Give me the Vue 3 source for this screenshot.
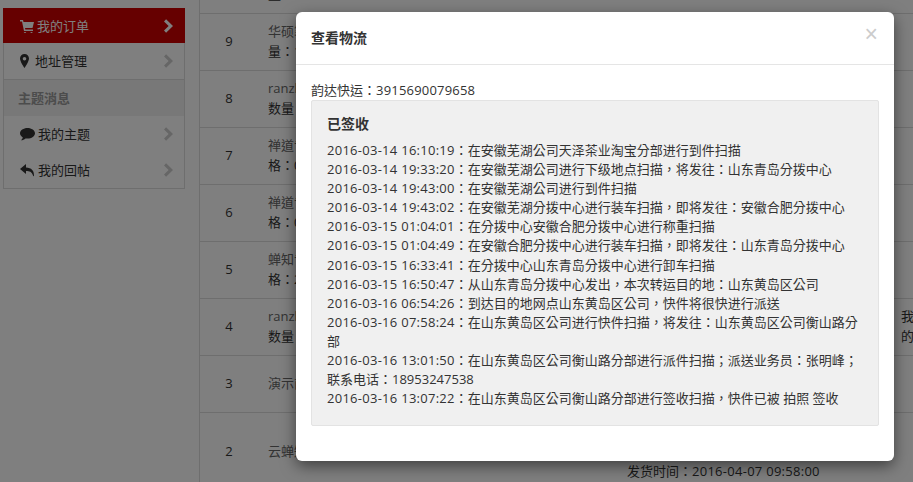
<script setup>
const orders = [
  { no: 10, lines: [{ t: '华硕笔记本电脑', link: true }, { t: '量：1' }] },
  { no: 9, lines: [{ t: '华硕笔记本电脑', link: true }, { t: '量：1' }] },
  { no: 8, lines: [{ t: 'ranzhi 然之协同', link: true }, { t: '数量：1' }] },
  { no: 7, lines: [{ t: '禅道专业版', link: true }, { t: '格：0.01' }] },
  { no: 6, lines: [{ t: '禅道专业版', link: true }, { t: '格：0.01' }] },
  { no: 5, lines: [{ t: '蝉知专业版', link: true }, { t: '格：2' }] },
  { no: 4, lines: [{ t: 'ranzhi 然之协同', link: true }, { t: '数量：1' }], note: ['我', '的'] },
  { no: 3, lines: [{ t: '演示商品', link: true }] },
  { no: 2, lines: [{ t: '云蝉知专业版', link: true }], shipped: '2016-04-07 09:58:00', tall: true }
]
const topMenu = [
  { name: '我的订单', icon: 'cart', active: true },
  { name: '地址管理', icon: 'pin' }
]
const subMenu = [
  { name: '我的主题', icon: 'comment' },
  { name: '我的回帖', icon: 'reply' }
]
const tracks = [
  ['2016-03-14 16:10:19', '在安徽芜湖公司天泽茶业淘宝分部进行到件扫描'],
  ['2016-03-14 19:33:20', '在安徽芜湖公司进行下级地点扫描，将发往：山东青岛分拨中心'],
  ['2016-03-14 19:43:00', '在安徽芜湖公司进行到件扫描'],
  ['2016-03-14 19:43:02', '在安徽芜湖分拨中心进行装车扫描，即将发往：安徽合肥分拨中心'],
  ['2016-03-15 01:04:01', '在分拨中心安徽合肥分拨中心进行称重扫描'],
  ['2016-03-15 01:04:49', '在安徽合肥分拨中心进行装车扫描，即将发往：山东青岛分拨中心'],
  ['2016-03-15 16:33:41', '在分拨中心山东青岛分拨中心进行卸车扫描'],
  ['2016-03-15 16:50:47', '从山东青岛分拨中心发出，本次转运目的地：山东黄岛区公司'],
  ['2016-03-16 06:54:26', '到达目的地网点山东黄岛区公司，快件将很快进行派送'],
  ['2016-03-16 07:58:24', '在山东黄岛区公司进行快件扫描，将发往：山东黄岛区公司衡山路分部'],
  ['2016-03-16 13:01:50', '在山东黄岛区公司衡山路分部进行派件扫描；派送业务员：张明峰；联系电话：18953247538'],
  ['2016-03-16 13:07:22', '在山东黄岛区公司衡山路分部进行签收扫描，快件已被 拍照 签收']
]
const icons = {
  cart: 'M0 1h3l.5 2H14l-1.5 6H5l.3 1.4H13V12H4L2 2.6H0z M5 13a1.3 1.3 0 1 0 .01 0z M11.5 13a1.3 1.3 0 1 0 .01 0z',
  pin: 'M4.5 0C2 0 0 2 0 4.600 0 7.800 4.500 14 4.500 14S9 7.800 9 4.600C9 2 7 0 4.500 0zm0 3a1.800 1.800 0 1 1 0 3.600 1.800 1.800 0 0 1 0-3.600z',
  comment: 'M7.500 1C3.400 1 0 3.300 0 6.300c0 1.700 1.100 3.200 2.800 4.200-.2 1-.8 1.900-1.800 2.700 1.800-.1 3.300-.7 4.500-1.800.6.100 1.300.2 2 .2 4.100 0 7.500-2.300 7.500-5.300S11.600 1 7.500 1z',
  reply: 'M6 1 0 6l6 5V8c3.500 0 5.800.8 7 4.500.3.800.8 1 1 .5.300-5-2.500-8.500-8-8.500z'
}
</script>

<template>
  <div class="page">
    <aside class="sidebar">
      <a v-for="m in topMenu" :key="m.name" class="item" :class="{ active: m.active }">
        <svg class="ico" :class="'ico-' + m.icon" viewBox="0 0 15 14"><path :d="icons[m.icon]" /></svg>
        <span>{{ m.name }}</span>
        <svg class="chev" viewBox="0 0 9.500 14"><path d="M2.200 0 9.500 7l-7.300 7L0 11.800 4.900 7 0 2.200z" /></svg>
      </a>
      <div class="group">主题消息</div>
      <a v-for="m in subMenu" :key="m.name" class="item">
        <svg class="ico" :class="'ico-' + m.icon" viewBox="0 0 15 14"><path :d="icons[m.icon]" /></svg>
        <span>{{ m.name }}</span>
        <svg class="chev" viewBox="0 0 9.500 14"><path d="M2.200 0 9.500 7l-7.300 7L0 11.800 4.900 7 0 2.200z" /></svg>
      </a>
    </aside>

    <section class="table">
      <div v-for="o in orders" :key="o.no" class="row" :class="{ tall: o.tall }">
        <div class="num">{{ o.no }}</div>
        <div class="product">
          <div v-for="l in o.lines" :key="l.t" :class="{ link: l.link }">{{ l.t }}</div>
        </div>
        <div class="status">
          <div v-if="o.shipped" class="shipped">发货时间：<span class="digits">{{ o.shipped }}</span></div>
        </div>
        <div class="note">
          <div v-for="n in o.note" :key="n">{{ n }}</div>
        </div>
      </div>
    </section>

    <div class="backdrop"></div>

    <div class="modal">
      <header class="modal-head">
        <h4>查看物流</h4>
        <span class="close">×</span>
      </header>
      <div class="modal-body">
        <div class="bill">韵达快运：<span class="digits bill-no">3915690079658</span></div>
        <div class="well">
          <h5>已签收</h5>
          <div v-for="t in tracks" :key="t[0]" class="track"><span class="digits">{{ t[0] }}</span>：{{ t[1] }}</div>
        </div>
      </div>
    </div>
  </div>
</template>

<style>
html, body { margin: 0; overflow: hidden; background: #fff; }
</style>

<style scoped>
.page {
  position: relative;
  display: flex;
  align-items: flex-start;
  width: 913px;
  height: 482px;
  overflow: hidden;
  background: #fff;
  color: #333;
  font: 13px/20px "Open Sans", "Noto Sans CJK TC", sans-serif;
}
.digits { letter-spacing: .27px; }
.bill-no { letter-spacing: .2px; }
.sidebar {
  flex: none;
  width: 180px;
  margin: 8px 14px 0 3px;
  border: 1px solid #ddd;
  border-top: 0;
}
.item {
  display: flex;
  align-items: center;
  height: 36px;
  padding-left: 16px;
  color: #333;
}
.item:nth-child(2) { border-bottom: 1px solid #ddd; }
.item.active {
  height: 35px;
  margin: 0 -1px;
  padding-left: 17px;
  background: #c00;
  color: #fff;
}
.ico { flex: none; width: 15px; height: 14px; margin-right: 3px; fill: currentColor; }
.active .ico { margin-right: 2px; }
.ico-pin { margin-right: 0; }
.chev { flex: none; width: 9px; height: 14px; margin-left: auto; margin-right: 11px; fill: #ccc; }
.active .chev { fill: #fff; margin-right: 12px; }
.group {
  height: 36px;
  padding-left: 14px;
  background: #f0f0f0;
  color: #999;
  font-weight: 700;
  line-height: 36px;
}
.table {
  flex: none;
  width: 760px;
  margin-top: -43px;
  border-left: 1px solid #ddd;
}
.row {
  display: flex;
  align-items: center;
  box-sizing: border-box;
  height: 57px;
  padding-bottom: 2px;
  border-bottom: 1px solid #ddd;
}
.row.tall { height: 78px; border-bottom: 0; }
.num { flex: none; width: 58px; text-align: center; }
.product { flex: none; width: 339px; padding: 0 10px; white-space: nowrap; }
.link { color: #666; }
.status { flex: none; width: 254px; padding: 0 10px; align-self: flex-end; }
.shipped { padding-bottom: 8px; white-space: nowrap; }
.note { padding-left: 10px; }
.backdrop {
  position: absolute;
  inset: 0;
  background: rgba(0, 0, 0, .5);
}
.modal {
  position: absolute;
  top: 12px;
  left: 296px;
  box-sizing: border-box;
  width: 598px;
  height: 449px;
  border-radius: 6px;
  background: #fff;
  box-shadow: 0 5px 15px rgba(0, 0, 0, .5);
}
.modal-head {
  display: flex;
  align-items: center;
  justify-content: space-between;
  box-sizing: border-box;
  height: 53px;
  padding: 0 15px;
  border-bottom: 1px solid #e5e5e5;
}
.modal-head h4 { margin: 0; font-size: 14px; font-weight: 700; line-height: 52px; }
.close { margin-top: -8px; margin-right: 1px; color: #ccc; font: 400 23px/1 "Liberation Sans", sans-serif; }
.modal-body { padding: 15px 15px 0; }
.bill { height: 20px; }
.well {
  box-sizing: border-box;
  padding: 15px 15px 17px;
  border: 1px solid #e3e3e3;
  border-radius: 2px;
  background: #f0f0f0;
  line-height: 19.1px;
}
.well h5 { margin: 0 0 10px; font-size: 14px; font-weight: 700; line-height: 15px; }
</style>
